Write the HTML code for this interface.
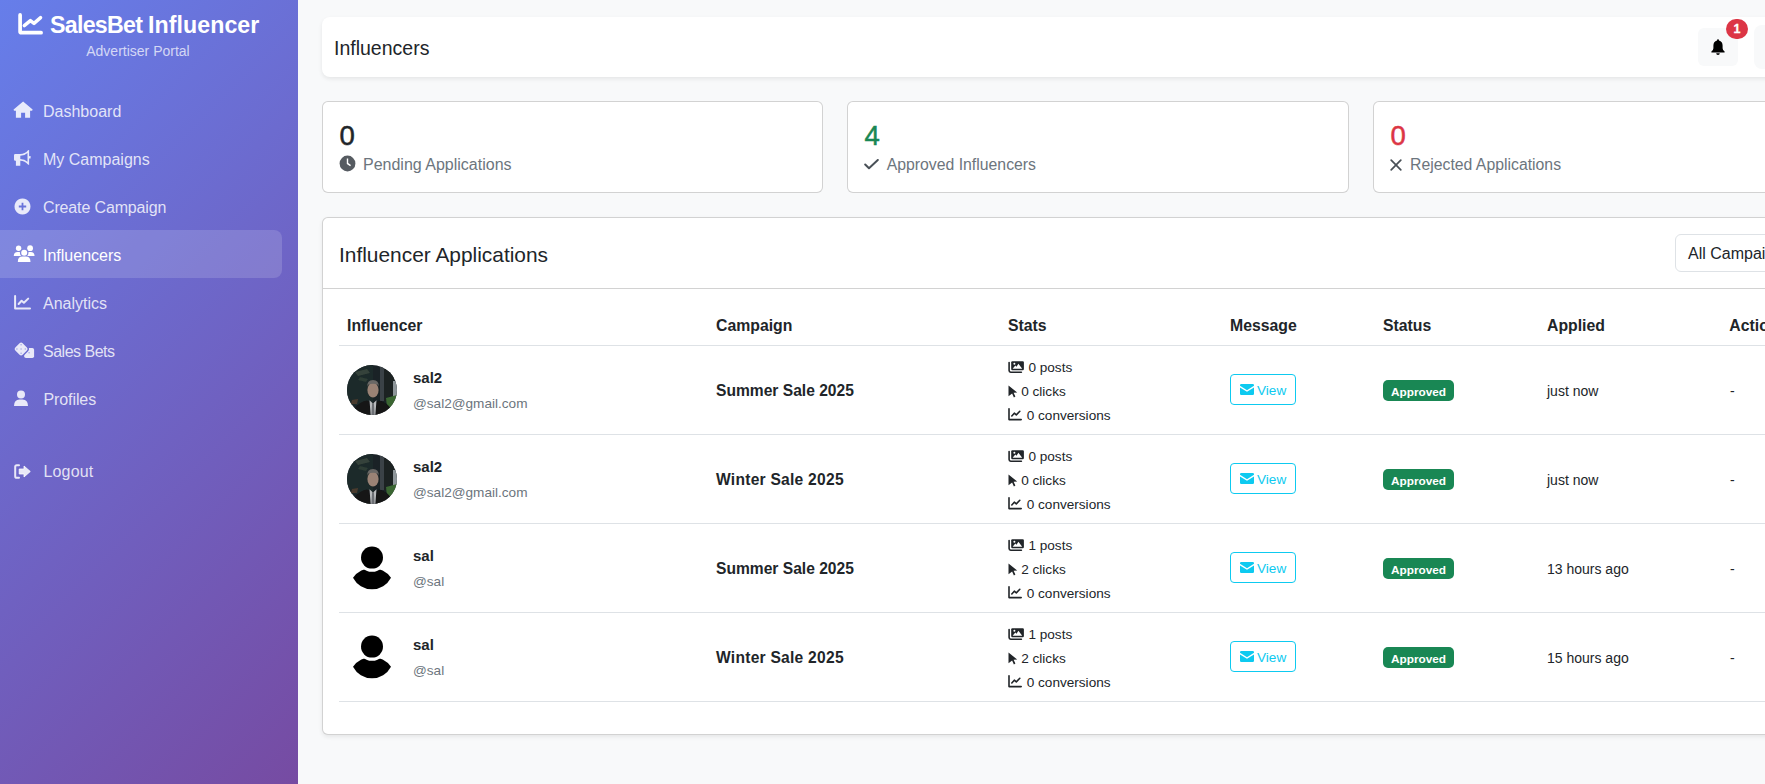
<!DOCTYPE html>
<html><head><meta charset="utf-8">
<style>
*{box-sizing:border-box;margin:0;padding:0}
html,body{width:1765px;height:784px;overflow:hidden}
body{background:#f8f9fa;font-family:"Liberation Sans",sans-serif;color:#212529;position:relative}
.abs{position:absolute}
.sidebar{left:0;top:0;width:298px;height:784px;background:linear-gradient(135deg,#667eea 0%,#764ba2 100%)}
.logo{left:50px;top:11.6px;font-size:23.2px;font-weight:700;color:#fff;white-space:nowrap;letter-spacing:-0.35px}
.portal{left:0;width:276px;text-align:center;top:42.5px;font-size:14px;color:rgba(255,255,255,.72);white-space:nowrap}
.nav{left:0;width:282px;height:48px;border-radius:0 8px 8px 0}
.nav.active{background:rgba(255,255,255,.15)}
.nav span{position:absolute;left:43px;top:16px;font-size:16px;line-height:20px;color:rgba(255,255,255,.82);white-space:nowrap}
.nav.active span{color:#fff}
.nav svg{position:absolute;left:14px;top:16px;fill:rgba(255,255,255,.85)}
.card{background:#fff;border:1px solid rgba(0,0,0,.175);border-radius:6px}
.hdr{left:322px;top:17px;width:1550px;height:60px;background:#fff;border-radius:8px;box-shadow:0 2px 4px rgba(0,0,0,.08)}
.hdr .t{left:12px;top:19px;font-size:19.5px;line-height:24px;white-space:nowrap}
.stat{top:101px;width:501px;height:92px}
.stat .n{left:16.6px;top:18.3px;font-size:27.5px;line-height:32px;-webkit-text-stroke:0.5px currentColor}
.stat .l{left:41px;top:152px;font-size:15.8px;line-height:24px;color:#6c757d;white-space:nowrap}
.apps{left:322px;top:217px;width:1550px;height:518px;box-shadow:0 2px 4px rgba(0,0,0,.075)}
.apps .h{left:16px;top:24.5px;font-size:20.9px;line-height:24px;white-space:nowrap}
.apps .hb{left:0;top:70px;width:100%;height:1px;background:rgba(0,0,0,.175)}
.sel{left:1352px;top:16px;width:200px;height:38px;border:1px solid #dee2e6;border-radius:6px;background:#fff}
.sel span{position:absolute;left:12px;top:8.5px;font-size:16px;line-height:20px;white-space:nowrap}
.th{top:316px;font-size:15.8px;font-weight:700;line-height:20px;white-space:nowrap}
.rl{left:339px;width:1430px;height:1px;background:#dee2e6}
.name{font-size:15px;font-weight:700;line-height:20px;white-space:nowrap}
.email{font-size:13.6px;line-height:20px;color:#6c757d;white-space:nowrap}
.camp{font-size:15.6px;font-weight:700;line-height:20px;white-space:nowrap}
.st{font-size:13.6px;line-height:20px;white-space:nowrap}
.st svg{position:absolute;left:0;fill:#212529}
.btn{width:66px;height:31px;border:1px solid #0dcaf0;border-radius:4px}
.btn span{position:absolute;left:26px;top:5.8px;font-size:13.6px;line-height:20px;color:#0dcaf0}
.btn svg{position:absolute;left:9px;top:9px;fill:#0dcaf0}
.badge{width:71px;height:21px;background:#198754;border-radius:5px}
.badge span{position:absolute;left:0;width:100%;text-align:center;top:4.7px;font-size:11.8px;line-height:14px;font-weight:700;color:#fff}
.ap{font-size:14px;line-height:20px;white-space:nowrap}
</style></head><body>

<div class="abs sidebar">
  <svg class="abs" style="left:18px;top:13px" width="26" height="23" viewBox="0 0 26 23"><path d="M2.1 1.9 V18.4 Q2.1 19.7 3.4 19.7 H23.1" fill="none" stroke="#fff" stroke-width="3.7" stroke-linecap="round" stroke-linejoin="round"/><path d="M6.3 12.6 L12.4 7.6 L16 10.4 L22.6 4.6" fill="none" stroke="#fff" stroke-width="3.4" stroke-linecap="round" stroke-linejoin="round"/></svg>
  <div class="abs logo"><span style="letter-spacing:-0.72px">SalesBet</span><span style="letter-spacing:-0.6px"> </span><span style="letter-spacing:0.05px">Influencer</span></div>
  <div class="abs portal">Advertiser Portal</div>

  <div class="abs nav" style="top:86px"><svg style="left:13px;top:14px" width="21" height="19" viewBox="0 0 21 19"><path d="M10.1 1.5 L19.6 9.6 Q19.8 10.7 18.8 10.7 L17.1 10.7 L17.1 17.8 L12.1 17.8 L12.1 12.8 L8.1 12.8 L8.1 17.8 L2.9 17.8 L2.9 10.7 L1.4 10.7 Q0.4 10.7 0.6 9.6 Z"/></svg><span>Dashboard</span></div>
  <div class="abs nav" style="top:134px"><svg style="left:14px;top:15px" width="17" height="17" viewBox="0 0 17 17"><path fill-rule="evenodd" d="M0 6.2 Q0 5 1.2 5 L6.3 5 Q11 5 14 1.2 Q14.6 0.9 15.1 0.9 L15.1 15.9 Q14.6 15.9 14 15.6 Q11 11.8 6.3 11.8 L6.3 16.8 L1.9 16.8 L1.9 11.8 L1.2 11.8 Q0 11.8 0 10.6 Z M6.3 6.7 L6.3 10.1 Q10.8 10.1 13.5 12.8 L13.5 4 Q10.8 6.7 6.3 6.7 Z"/><rect x="15" y="7" width="1.6" height="2.6" rx="0.5"/></svg><span>My Campaigns</span></div>
  <div class="abs nav" style="top:182px"><svg width="17" height="17" viewBox="0 0 17 17"><path d="M8.5 0.5 A8 8 0 1 1 8.49 0.5 Z M7.6 4.8 V7.6 H4.8 V9.4 H7.6 V12.2 H9.4 V9.4 H12.2 V7.6 H9.4 V4.8 Z" fill-rule="evenodd"/></svg><span style="letter-spacing:-0.14px">Create Campaign</span></div>
  <div class="abs nav active" style="top:230px"><svg style="left:13px;top:15px;fill:#fff" width="22" height="18" viewBox="0 0 22 18"><defs><mask id="um"><rect width="22" height="18" fill="#fff"/><circle cx="11.2" cy="7.8" r="4.3" fill="#000"/><path d="M4.8 17 Q4.8 11.6 9.5 11.6 H12.8 Q17.5 11.6 17.5 17 Z" fill="#000" stroke="#000" stroke-width="2.4"/></mask></defs><g mask="url(#um)"><circle cx="5.6" cy="3.2" r="2.7"/><circle cx="17.1" cy="3.2" r="2.9"/><path d="M0.8 10.9 Q0.8 6.9 4.6 6.9 L6.5 6.9 Q9 6.9 9 8.9 V10.9 Z"/><path d="M21.5 10.9 Q21.5 6.9 17.7 6.9 L15.8 6.9 Q13.3 6.9 13.3 8.9 V10.9 Z"/></g><circle cx="11.2" cy="7.8" r="3"/><path d="M4.8 17 Q4.8 11.6 9.5 11.6 H12.8 Q17.5 11.6 17.5 17 Z"/></svg><span>Influencers</span></div>
  <div class="abs nav" style="top:278px"><svg style="left:14px;top:16.5px" width="17" height="15" viewBox="0 0 17 15"><path d="M1.1 1 V13.6 H16" fill="none" stroke="rgba(255,255,255,.85)" stroke-width="2" stroke-linecap="round" stroke-linejoin="round"/><path d="M4.6 9 L7.6 5.8 L9.9 7.8 L14.2 3.6" fill="none" stroke="rgba(255,255,255,.85)" stroke-width="2" stroke-linecap="round" stroke-linejoin="round"/></svg><span>Analytics</span></div>
  <div class="abs nav" style="top:326px"><svg style="left:13px;top:14px" width="22" height="19" viewBox="0 0 22 19"><defs><mask id="dm"><rect width="22" height="19" fill="#fff"/><rect x="2.9" y="3.8" width="10.4" height="10.4" rx="2.2" transform="rotate(45 8.1 9)" fill="#000" stroke="#000" stroke-width="2.6"/></mask></defs><rect x="11.2" y="7.9" width="9.9" height="10.1" rx="1.8" mask="url(#dm)"/><rect x="2.9" y="3.8" width="10.4" height="10.4" rx="2.2" transform="rotate(45 8.1 9)"/><g fill="#a4abe6"><circle cx="8.1" cy="4.8" r="0.8"/><circle cx="3.9" cy="9" r="0.8"/><circle cx="8.1" cy="9" r="0.8"/><circle cx="12.3" cy="9" r="0.8"/><circle cx="8.1" cy="13.2" r="0.8"/><circle cx="16.1" cy="12.8" r="0.8"/></g></svg><span style="letter-spacing:-0.5px">Sales Bets</span></div>
  <div class="abs nav" style="top:374px"><svg style="left:13px" width="17" height="17" viewBox="0 0 17 17"><circle cx="8" cy="4.5" r="4"/><path d="M1 16 Q1 9.5 6.5 9.5 L9.5 9.5 Q15 9.5 15 16 Z"/></svg><span style="letter-spacing:-0.1px;left:43.5px">Profiles</span></div>
  <div class="abs nav" style="top:446px"><svg style="left:14px;top:17.5px" width="17" height="15" viewBox="0 0 17 15"><path d="M5 1.2 H2.8 Q1.2 1.2 1.2 2.8 V12.2 Q1.2 13.8 2.8 13.8 H5" fill="none" stroke="rgba(255,255,255,.85)" stroke-width="2" stroke-linecap="round"/><path d="M10 2 L16.3 7.5 L10 13 L10 10 L5.2 10 L5.2 5 L10 5 Z" stroke="rgba(255,255,255,.85)" stroke-width="0.9" stroke-linejoin="round"/></svg><span style="letter-spacing:0.15px;left:43.5px">Logout</span></div>
</div>

<div class="abs hdr">
  <div class="abs t">Influencers</div>
</div>
<div class="abs" style="left:1698px;top:28px;width:40px;height:38px;background:#f8f9fa;border-radius:6px"></div>
<svg class="abs" style="left:1709.5px;top:39px" width="16" height="16" viewBox="0 0 16 16"><path d="M8 0.3 Q9 0.3 9 1.4 Q12.6 2.2 12.6 6.6 L12.6 9.2 Q12.6 10.8 14.6 12.6 L14.6 13.4 L1.4 13.4 L1.4 12.6 Q3.4 10.8 3.4 9.2 L3.4 6.6 Q3.4 2.2 7 1.4 Q7 0.3 8 0.3 Z"/><path d="M6.2 14.2 L9.8 14.2 Q9.8 15.9 8 15.9 Q6.2 15.9 6.2 14.2 Z"/></svg>
<div class="abs" style="left:1726px;top:19px;width:22px;height:20px;border-radius:11px;background:#dc3545;color:#fff;font-size:12.5px;font-weight:700;text-align:center;line-height:20px;-webkit-text-stroke:0.3px #fff">1</div>
<div class="abs" style="left:1754px;top:25px;width:60px;height:44px;background:#f8f9fa;border-radius:8px"></div>

<div class="abs card stat" style="left:322px;width:500.5px">
  <div class="abs n">0</div>
  <svg class="abs" style="left:15.7px;top:53.1px" width="17" height="17" viewBox="0 0 17 17"><circle cx="8.5" cy="8.5" r="7.9" fill="#565b61"/><path d="M7.8 3.5 H9.2 V8.1 L12 10 L11.2 11.2 L7.8 9 Z" fill="#fff"/></svg>
  <div class="abs l" style="top:51px;left:40px;font-size:16px">Pending Applications</div>
</div>
<div class="abs card stat" style="left:847px;width:501.8px">
  <div class="abs n" style="color:#198754">4</div>
  <svg class="abs" style="left:16px;top:57px" width="15" height="11" viewBox="0 0 15 11"><path d="M1.2 5.5 L5 9.3 L13.8 1" fill="none" stroke="#495057" stroke-width="2" stroke-linecap="round" stroke-linejoin="round"/></svg>
  <div class="abs l" style="top:51px;left:38.7px">Approved Influencers</div>
</div>
<div class="abs card stat" style="left:1373px">
  <div class="abs n" style="color:#dc3545">0</div>
  <svg class="abs" style="left:16px;top:56.5px" width="12" height="12" viewBox="0 0 12 12"><path d="M1.2 1.2 L10.8 10.8 M10.8 1.2 L1.2 10.8" fill="none" stroke="#495057" stroke-width="1.7" stroke-linecap="round"/></svg>
  <div class="abs l" style="top:51px;left:36px">Rejected Applications</div>
</div>

<div class="abs card apps">
  <div class="abs h">Influencer Applications</div>
  <div class="abs hb"></div>
  <div class="abs sel"><span>All Campaigns</span></div>
</div>

<div class="abs th" style="left:347px">Influencer</div>
<div class="abs th" style="left:716px">Campaign</div>
<div class="abs th" style="left:1008px">Stats</div>
<div class="abs th" style="left:1230px">Message</div>
<div class="abs th" style="left:1383px">Status</div>
<div class="abs th" style="left:1547px">Applied</div>
<div class="abs th" style="left:1729.3px">Actions</div>
<div class="abs rl" style="top:345px"></div>
<div class="abs rl" style="top:434px"></div>
<div class="abs rl" style="top:523px"></div>
<div class="abs rl" style="top:612px"></div>
<div class="abs rl" style="top:701px"></div>

<div class="abs" style="left:347px;top:365px;width:50px;height:50px"><svg width="50" height="50" viewBox="0 0 50 50"><defs><clipPath id="cp0"><circle cx="25" cy="25" r="25"/></clipPath><filter id="bl0"><feGaussianBlur stdDeviation="0.55"/></filter></defs><g clip-path="url(#cp0)"><rect width="50" height="50" fill="#1a2226"/><g filter="url(#bl0)"><rect x="0" y="0" width="26" height="40" fill="#1e2a2a"/><path d="M8 7 L20 4 L23 8 L11 11 Z" fill="#34423a"/><path d="M13 12 L21 14 L19 17 L11 15 Z" fill="#2e3c34"/><rect x="33" y="2" width="4" height="34" fill="#3a4246"/><rect x="37" y="4" width="10" height="32" fill="#1a2024"/><rect x="46" y="16" width="4" height="18" fill="#8e969a"/><path d="M39 33 L50 30 L50 42 L40 42 Z" fill="#3a6632"/><path d="M5 35 L11 34 L10 39 L4 39 Z" fill="#4a3a2e"/><ellipse cx="26" cy="25" rx="5.6" ry="7.6" fill="#9a8274"/><path d="M20.2 22 Q20 15 26 15 Q32 15 31.8 22 L31 19.8 Q26 17.5 21 19.8 Z" fill="#6a6866"/><path d="M5 52 Q7 38 20 35.5 L26 38 L32 35.5 Q44 38 47 52 Z" fill="#121417"/><path d="M22.5 35.2 L26 38.5 L29.5 35.2 L28.2 52 L23.8 52 Z" fill="#b8babc"/><path d="M25.1 38 L26.9 38 L27.6 50 L24.4 50 Z" fill="#6d7074"/></g></g></svg></div>
<div class="abs name" style="left:413px;top:368px">sal2</div>
<div class="abs email" style="left:413px;top:393.7px">@sal2@gmail.com</div>
<div class="abs camp" style="left:716px;top:381px;">Summer Sale 2025</div>
<div class="abs st" style="left:1008px;top:358px;width:120px;height:20px"><svg width="17" height="14" viewBox="0 0 17 14" style="top:1.5px"><rect x="3.2" y="1.3" width="12.7" height="9" rx="1.2" fill="#212529"/><path d="M4.6 8.8 L7.3 5.6 L8.5 6.8 L10.4 3.8 L14.2 8.8 Z" fill="#fff"/><circle cx="6.4" cy="3.7" r="1" fill="#fff"/><path d="M1.1 2.6 V10.6 Q1.1 12.2 2.7 12.2 H13.4" fill="none" stroke="#212529" stroke-width="1.6" stroke-linecap="round"/></svg><span class="abs" style="left:20.4px;top:0">0 posts</span></div>
<div class="abs st" style="left:1008px;top:382px;width:120px;height:20px"><svg width="10" height="13" viewBox="0 0 10 13" style="top:3px"><path d="M0.5 0.5 L9.2 7.6 L5.6 7.8 L7.4 11.6 L5.9 12.4 L4.1 8.5 L0.5 11.2 Z"/></svg><span class="abs" style="left:13.2px;top:0">0 clicks</span></div>
<div class="abs st" style="left:1008px;top:406px;width:120px;height:20px"><svg width="14" height="13" viewBox="0 0 14 13" style="top:2.4px"><path d="M1 0.8 V11.6 H13.2" fill="none" stroke="#212529" stroke-width="1.6" stroke-linecap="round" stroke-linejoin="round"/><path d="M3.8 8 L6.3 5.2 L8.3 6.9 L11.8 3.3" fill="none" stroke="#212529" stroke-width="1.6" stroke-linecap="round" stroke-linejoin="round"/></svg><span class="abs" style="left:18.7px;top:0">0 conversions</span></div>
<div class="abs btn" style="left:1230px;top:374px"><svg width="14" height="11" viewBox="0 0 14 11"><path d="M0 1.2 Q0 0 1.2 0 H12.8 Q14 0 14 1.2 V1.8 L7 6.2 L0 1.8 Z"/><path d="M0 3.4 L7 7.8 L14 3.4 V9.8 Q14 11 12.8 11 H1.2 Q0 11 0 9.8 Z"/></svg><span>View</span></div>
<div class="abs badge" style="left:1383px;top:380px"><span>Approved</span></div>
<div class="abs ap" style="left:1547px;top:381px">just now</div>
<div class="abs ap" style="left:1730px;top:381.3px">-</div>
<div class="abs" style="left:347px;top:454px;width:50px;height:50px"><svg width="50" height="50" viewBox="0 0 50 50"><defs><clipPath id="cp1"><circle cx="25" cy="25" r="25"/></clipPath><filter id="bl1"><feGaussianBlur stdDeviation="0.55"/></filter></defs><g clip-path="url(#cp1)"><rect width="50" height="50" fill="#1a2226"/><g filter="url(#bl1)"><rect x="0" y="0" width="26" height="40" fill="#1e2a2a"/><path d="M8 7 L20 4 L23 8 L11 11 Z" fill="#34423a"/><path d="M13 12 L21 14 L19 17 L11 15 Z" fill="#2e3c34"/><rect x="33" y="2" width="4" height="34" fill="#3a4246"/><rect x="37" y="4" width="10" height="32" fill="#1a2024"/><rect x="46" y="16" width="4" height="18" fill="#8e969a"/><path d="M39 33 L50 30 L50 42 L40 42 Z" fill="#3a6632"/><path d="M5 35 L11 34 L10 39 L4 39 Z" fill="#4a3a2e"/><ellipse cx="26" cy="25" rx="5.6" ry="7.6" fill="#9a8274"/><path d="M20.2 22 Q20 15 26 15 Q32 15 31.8 22 L31 19.8 Q26 17.5 21 19.8 Z" fill="#6a6866"/><path d="M5 52 Q7 38 20 35.5 L26 38 L32 35.5 Q44 38 47 52 Z" fill="#121417"/><path d="M22.5 35.2 L26 38.5 L29.5 35.2 L28.2 52 L23.8 52 Z" fill="#b8babc"/><path d="M25.1 38 L26.9 38 L27.6 50 L24.4 50 Z" fill="#6d7074"/></g></g></svg></div>
<div class="abs name" style="left:413px;top:457px">sal2</div>
<div class="abs email" style="left:413px;top:482.7px">@sal2@gmail.com</div>
<div class="abs camp" style="left:716px;top:470px;letter-spacing:0.25px;">Winter Sale 2025</div>
<div class="abs st" style="left:1008px;top:447px;width:120px;height:20px"><svg width="17" height="14" viewBox="0 0 17 14" style="top:1.5px"><rect x="3.2" y="1.3" width="12.7" height="9" rx="1.2" fill="#212529"/><path d="M4.6 8.8 L7.3 5.6 L8.5 6.8 L10.4 3.8 L14.2 8.8 Z" fill="#fff"/><circle cx="6.4" cy="3.7" r="1" fill="#fff"/><path d="M1.1 2.6 V10.6 Q1.1 12.2 2.7 12.2 H13.4" fill="none" stroke="#212529" stroke-width="1.6" stroke-linecap="round"/></svg><span class="abs" style="left:20.4px;top:0">0 posts</span></div>
<div class="abs st" style="left:1008px;top:471px;width:120px;height:20px"><svg width="10" height="13" viewBox="0 0 10 13" style="top:3px"><path d="M0.5 0.5 L9.2 7.6 L5.6 7.8 L7.4 11.6 L5.9 12.4 L4.1 8.5 L0.5 11.2 Z"/></svg><span class="abs" style="left:13.2px;top:0">0 clicks</span></div>
<div class="abs st" style="left:1008px;top:495px;width:120px;height:20px"><svg width="14" height="13" viewBox="0 0 14 13" style="top:2.4px"><path d="M1 0.8 V11.6 H13.2" fill="none" stroke="#212529" stroke-width="1.6" stroke-linecap="round" stroke-linejoin="round"/><path d="M3.8 8 L6.3 5.2 L8.3 6.9 L11.8 3.3" fill="none" stroke="#212529" stroke-width="1.6" stroke-linecap="round" stroke-linejoin="round"/></svg><span class="abs" style="left:18.7px;top:0">0 conversions</span></div>
<div class="abs btn" style="left:1230px;top:463px"><svg width="14" height="11" viewBox="0 0 14 11"><path d="M0 1.2 Q0 0 1.2 0 H12.8 Q14 0 14 1.2 V1.8 L7 6.2 L0 1.8 Z"/><path d="M0 3.4 L7 7.8 L14 3.4 V9.8 Q14 11 12.8 11 H1.2 Q0 11 0 9.8 Z"/></svg><span>View</span></div>
<div class="abs badge" style="left:1383px;top:469px"><span>Approved</span></div>
<div class="abs ap" style="left:1547px;top:470px">just now</div>
<div class="abs ap" style="left:1730px;top:470.3px">-</div>
<div class="abs" style="left:347px;top:543px;width:50px;height:50px"><svg width="50" height="50" viewBox="0 0 50 50"><path d="M6 34.7 A21.4 21.4 0 0 0 44 34.7 A23.5 23.5 0 0 0 6 34.7 Z" fill="#000"/><circle cx="25" cy="14.6" r="14.2" fill="#fff"/><circle cx="25" cy="14.6" r="11" fill="#000"/></svg></div>
<div class="abs name" style="left:413px;top:546px">sal</div>
<div class="abs email" style="left:413px;top:571.7px">@sal</div>
<div class="abs camp" style="left:716px;top:559px;">Summer Sale 2025</div>
<div class="abs st" style="left:1008px;top:536px;width:120px;height:20px"><svg width="17" height="14" viewBox="0 0 17 14" style="top:1.5px"><rect x="3.2" y="1.3" width="12.7" height="9" rx="1.2" fill="#212529"/><path d="M4.6 8.8 L7.3 5.6 L8.5 6.8 L10.4 3.8 L14.2 8.8 Z" fill="#fff"/><circle cx="6.4" cy="3.7" r="1" fill="#fff"/><path d="M1.1 2.6 V10.6 Q1.1 12.2 2.7 12.2 H13.4" fill="none" stroke="#212529" stroke-width="1.6" stroke-linecap="round"/></svg><span class="abs" style="left:20.4px;top:0">1 posts</span></div>
<div class="abs st" style="left:1008px;top:560px;width:120px;height:20px"><svg width="10" height="13" viewBox="0 0 10 13" style="top:3px"><path d="M0.5 0.5 L9.2 7.6 L5.6 7.8 L7.4 11.6 L5.9 12.4 L4.1 8.5 L0.5 11.2 Z"/></svg><span class="abs" style="left:13.2px;top:0">2 clicks</span></div>
<div class="abs st" style="left:1008px;top:584px;width:120px;height:20px"><svg width="14" height="13" viewBox="0 0 14 13" style="top:2.4px"><path d="M1 0.8 V11.6 H13.2" fill="none" stroke="#212529" stroke-width="1.6" stroke-linecap="round" stroke-linejoin="round"/><path d="M3.8 8 L6.3 5.2 L8.3 6.9 L11.8 3.3" fill="none" stroke="#212529" stroke-width="1.6" stroke-linecap="round" stroke-linejoin="round"/></svg><span class="abs" style="left:18.7px;top:0">0 conversions</span></div>
<div class="abs btn" style="left:1230px;top:552px"><svg width="14" height="11" viewBox="0 0 14 11"><path d="M0 1.2 Q0 0 1.2 0 H12.8 Q14 0 14 1.2 V1.8 L7 6.2 L0 1.8 Z"/><path d="M0 3.4 L7 7.8 L14 3.4 V9.8 Q14 11 12.8 11 H1.2 Q0 11 0 9.8 Z"/></svg><span>View</span></div>
<div class="abs badge" style="left:1383px;top:558px"><span>Approved</span></div>
<div class="abs ap" style="left:1547px;top:559px">13 hours ago</div>
<div class="abs ap" style="left:1730px;top:559.3px">-</div>
<div class="abs" style="left:347px;top:632px;width:50px;height:50px"><svg width="50" height="50" viewBox="0 0 50 50"><path d="M6 34.7 A21.4 21.4 0 0 0 44 34.7 A23.5 23.5 0 0 0 6 34.7 Z" fill="#000"/><circle cx="25" cy="14.6" r="14.2" fill="#fff"/><circle cx="25" cy="14.6" r="11" fill="#000"/></svg></div>
<div class="abs name" style="left:413px;top:635px">sal</div>
<div class="abs email" style="left:413px;top:660.7px">@sal</div>
<div class="abs camp" style="left:716px;top:648px;letter-spacing:0.25px;">Winter Sale 2025</div>
<div class="abs st" style="left:1008px;top:625px;width:120px;height:20px"><svg width="17" height="14" viewBox="0 0 17 14" style="top:1.5px"><rect x="3.2" y="1.3" width="12.7" height="9" rx="1.2" fill="#212529"/><path d="M4.6 8.8 L7.3 5.6 L8.5 6.8 L10.4 3.8 L14.2 8.8 Z" fill="#fff"/><circle cx="6.4" cy="3.7" r="1" fill="#fff"/><path d="M1.1 2.6 V10.6 Q1.1 12.2 2.7 12.2 H13.4" fill="none" stroke="#212529" stroke-width="1.6" stroke-linecap="round"/></svg><span class="abs" style="left:20.4px;top:0">1 posts</span></div>
<div class="abs st" style="left:1008px;top:649px;width:120px;height:20px"><svg width="10" height="13" viewBox="0 0 10 13" style="top:3px"><path d="M0.5 0.5 L9.2 7.6 L5.6 7.8 L7.4 11.6 L5.9 12.4 L4.1 8.5 L0.5 11.2 Z"/></svg><span class="abs" style="left:13.2px;top:0">2 clicks</span></div>
<div class="abs st" style="left:1008px;top:673px;width:120px;height:20px"><svg width="14" height="13" viewBox="0 0 14 13" style="top:2.4px"><path d="M1 0.8 V11.6 H13.2" fill="none" stroke="#212529" stroke-width="1.6" stroke-linecap="round" stroke-linejoin="round"/><path d="M3.8 8 L6.3 5.2 L8.3 6.9 L11.8 3.3" fill="none" stroke="#212529" stroke-width="1.6" stroke-linecap="round" stroke-linejoin="round"/></svg><span class="abs" style="left:18.7px;top:0">0 conversions</span></div>
<div class="abs btn" style="left:1230px;top:641px"><svg width="14" height="11" viewBox="0 0 14 11"><path d="M0 1.2 Q0 0 1.2 0 H12.8 Q14 0 14 1.2 V1.8 L7 6.2 L0 1.8 Z"/><path d="M0 3.4 L7 7.8 L14 3.4 V9.8 Q14 11 12.8 11 H1.2 Q0 11 0 9.8 Z"/></svg><span>View</span></div>
<div class="abs badge" style="left:1383px;top:647px"><span>Approved</span></div>
<div class="abs ap" style="left:1547px;top:648px">15 hours ago</div>
<div class="abs ap" style="left:1730px;top:648.3px">-</div>

</body></html>
